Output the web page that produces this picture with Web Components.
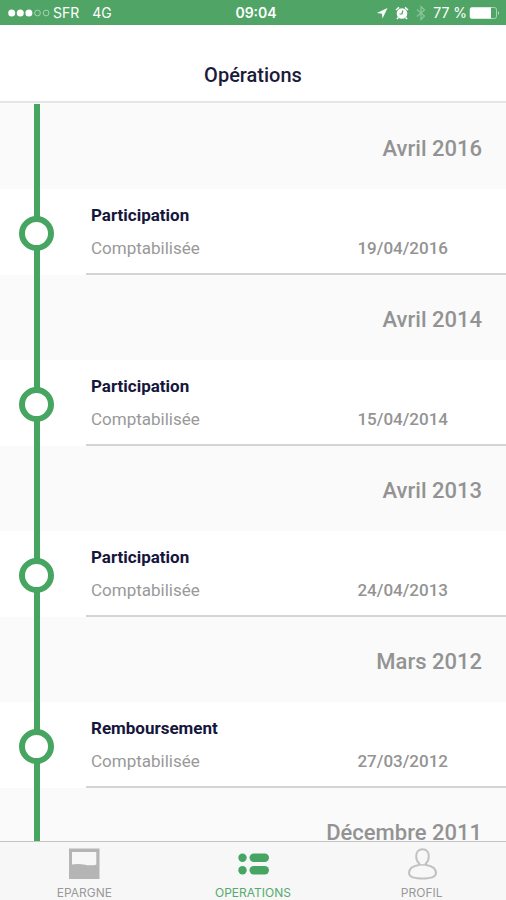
<!DOCTYPE html>
<html lang="fr">
<head>
<meta charset="utf-8">
<meta name="viewport" content="width=device-width, initial-scale=1">
<title>Opérations</title>
<style>
  html, body { height: 100%; margin: 0; }
  body { font-family: Roboto, "Liberation Sans", sans-serif; background: #fff; }
</style>
</head>
<body>
<app-screen>
  <status-bar slot="top" carrier="SFR" network="4G" time="09:04" battery="77 %"></status-bar>
  <title-bar slot="top">Opérations</title-bar>
  <month-group month="Avril 2016"><operation-row label="Participation" status="Comptabilisée" date="19/04/2016"></operation-row></month-group>
  <month-group month="Avril 2014"><operation-row label="Participation" status="Comptabilisée" date="15/04/2014"></operation-row></month-group>
  <month-group month="Avril 2013"><operation-row label="Participation" status="Comptabilisée" date="24/04/2013"></operation-row></month-group>
  <month-group month="Mars 2012"><operation-row label="Remboursement" status="Comptabilisée" date="27/03/2012"></operation-row></month-group>
  <month-group month="Décembre 2011"></month-group>
  <tab-bar slot="bottom">
    <tab-item label="EPARGNE">
      <svg width="32" height="32" viewBox="0 0 32 32" aria-hidden="true"><path fill="#b5b5b5" fill-rule="evenodd" d="M1 .5H31.500V31H1ZM4 4V16.500C9 15.500 13 16 17 16.800C20 17.400 24 17.600 28.300 16.800V4Z"/></svg>
    </tab-item>
    <tab-item label="OPERATIONS" active>
      <svg width="32" height="32" viewBox="0 0 32 32" aria-hidden="true" fill="#46a562"><circle cx="5.500" cy="9.800" r="4.200"/><circle cx="5.500" cy="22.200" r="4.200"/><rect x="12.500" y="5.600" width="19.500" height="8.400" rx="4.200"/><rect x="12.500" y="18" width="19.500" height="8.400" rx="4.200"/></svg>
    </tab-item>
    <tab-item label="PROFIL">
      <svg width="32" height="32" viewBox="0 0 32 32" aria-hidden="true" fill="none" stroke="#c2c2c2" stroke-width="2"><path d="M16.500 1.200C12.500 1.200 10.200 4.200 10.200 8.200C10.200 11.200 11.300 13.700 13 15.200V17C6.500 18 3 21 3 25C3 28.700 8.500 30.500 16.500 30.500S30 28.700 30 25C30 21 26.500 18 20 17V15.200C21.700 13.700 22.800 11.200 22.800 8.200C22.800 4.200 20.500 1.200 16.500 1.200Z"/><path d="M13 16Q16.500 18 20 16" stroke-width="1.500"/></svg>
    </tab-item>
  </tab-bar>
</app-screen>

<script>
  function define(name, render) {
    customElements.define(name, class extends HTMLElement {
      connectedCallback() {
        if (this.shadowRoot) return;
        this.attachShadow({ mode: 'open' }).innerHTML = render(this);
      }
    });
  }
  const attr = (el, name) => el.getAttribute(name) || '';

  define('app-screen', () => `
    <style>
      :host { display: flex; flex-direction: column; height: 100vh; overflow: hidden; }
      main { flex: 1; min-height: 0; overflow: hidden; padding-top: 1px; background: #fbfbfb; }
    </style>
    <slot name="top"></slot>
    <main><slot></slot></main>
    <slot name="bottom"></slot>`);

  define('status-bar', el => `
    <style>
      :host { display: grid; grid-template-columns: 1fr auto 1fr; align-items: center; height: 25px;
              padding: 1px 6px 0 8px; box-sizing: border-box; background: #50a566; color: #fff;
              font: 14px/24px Inter, "Liberation Sans", sans-serif; white-space: nowrap; }
      div { display: flex; align-items: center; }
      .left { gap: 3px; }
      .net { margin-left: 10px; }
      .time { font-weight: 600; padding-left: 4px; }
      .right { justify-content: flex-end; gap: 2px; }
      .right svg { margin-right: 5px; }
      .right svg.battery { margin-right: 0; }
      svg { display: block; }
    </style>
    <div class="left">
      <svg width="42" height="10" viewBox="0 0 42 10" aria-hidden="true"><g fill="#fff"><circle cx="3.700" cy="5" r="3.500"/><circle cx="12.300" cy="5" r="3.500"/><circle cx="20.900" cy="5" r="3.500"/></g><g fill="none" stroke="#a5d2b1"><circle cx="29.500" cy="5" r="2.900"/><circle cx="38.100" cy="5" r="2.900"/></g></svg>
      <span>${attr(el, 'carrier')}</span><span class="net">${attr(el, 'network')}</span>
    </div>
    <span class="time">${attr(el, 'time')}</span>
    <div class="right">
      <svg width="12" height="12" viewBox="0 0 12 12" aria-hidden="true"><path fill="#fff" d="M11.500 1L6.500 11.500L6 6.800L.8 6Z"/></svg>
      <svg width="14" height="14" viewBox="0 0 14 14" aria-hidden="true"><circle cx="7" cy="7.500" r="5.300" fill="#fff"/><path d="M1 4L4 1.300M13 4L10 1.300M3.300 11.500L2 13M10.700 11.500L12 13" stroke="#fff" stroke-width="1.600"/><path d="M7.800 4.500L7 8H4.500" fill="none" stroke="#50a566" stroke-width="1.200"/></svg>
      <svg width="10" height="16" viewBox="0 0 10 16" aria-hidden="true"><path d="M1 4.500L8.500 11L5 14.500V1.500L8.500 5L1 11.500" fill="none" stroke="#8bc59b" stroke-width="1.200"/></svg>
      <span>${attr(el, 'battery')}</span>
      <svg class="battery" width="31" height="12" viewBox="0 0 31 12" aria-hidden="true"><rect x="1" y=".5" width="26.500" height="11" rx="2" fill="none" stroke="#a8d5b4"/><path d="M2.500 .5H22V11.500H2.500Q1 11.500 1 10V2Q1 .5 2.500 .5Z" fill="#fff"/><path d="M29 4Q30.500 6 29 8Z" fill="#fff"/></svg>
    </div>`);

  define('title-bar', () => `
    <style>
      :host { display: block; padding: 38px 16px 13px; background: #fff; border-bottom: 2px solid #e5e5e5; }
      h1 { margin: 0; font-size: 20px; line-height: 25px; font-weight: 500; text-align: center; color: #1b1b3a; }
    </style>
    <h1><slot></slot></h1>`);

  define('month-group', el => `
    <style>
      :host { display: block; }
      header { display: grid; grid-template-columns: 73px 1fr; height: 85px; background: #fafafa; }
      i { width: 6px; justify-self: center; background: #46a560; }
      h2 { margin: 0; padding-right: 24px; align-self: center; text-align: right;
           font-size: 22px; line-height: 28px; padding-top: 4px; font-weight: 500; color: #939393; }
    </style>
    <section><header><i></i><h2>${attr(el, 'month')}</h2></header><slot></slot></section>`);

  define('operation-row', el => `
    <style>
      :host { display: grid; grid-template-columns: 73px 1fr; background: #fff; }
      .rail { display: grid; place-items: center; background: linear-gradient(#46a560, #46a560) 34px 0 / 6px 100% no-repeat; padding-top: 2px; }
      .dot { width: 35px; height: 35px; box-sizing: border-box; border: 6px solid #46a560; border-radius: 50%; background: #fff; }
      .body { display: grid; grid-template-columns: 1fr auto; row-gap: 13px; margin-left: 13px;
              padding: 16px 58px 15px 5px; border-bottom: 2px solid #d4d4d4; line-height: 20px; }
      h3 { grid-column: 1 / 3; margin: 0; font-size: 17px; line-height: 20px; font-weight: 700; color: #15163c; }
      span { font-size: 17px; color: #999; }
      time { font-size: 17px; font-weight: 500; color: #939393; }
    </style>
    <div class="rail"><div class="dot"></div></div>
    <div class="body"><h3>${attr(el, 'label')}</h3><span>${attr(el, 'status')}</span><time>${attr(el, 'date')}</time></div>`);

  define('tab-bar', () => `
    <style>
      :host { display: block; background: #f7f7f7; border-top: 1px solid #c4c4c4; }
      nav { display: grid; grid-template-columns: repeat(3, 1fr); }
    </style>
    <nav><slot></slot></nav>`);

  define('tab-item', el => `
    <style>
      :host { display: block; }
      button { display: flex; flex-direction: column; align-items: center; gap: 5px; width: 100%; border: 0; margin: 0;
               padding: 6px 0 0; background: none; color: #999; font: 12px/15px Inter, "Liberation Sans", sans-serif; cursor: pointer; }
      :host([active]) button { color: #55ab6e; }
      ::slotted(svg) { display: block; }
    </style>
    <button type="button" ${el.hasAttribute('active') ? 'aria-current="page"' : ''}><slot></slot><span>${attr(el, 'label')}</span></button>`);
</script>
</body>
</html>
